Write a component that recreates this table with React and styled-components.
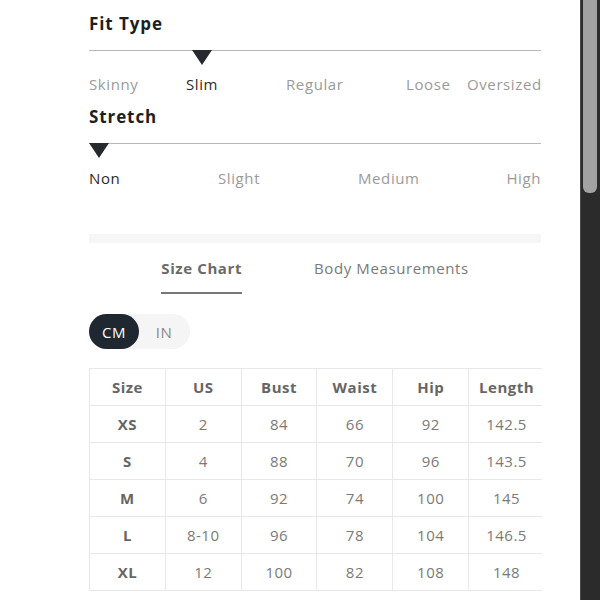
import React from "react";
import styled, { createGlobalStyle } from "styled-components";

const Global = createGlobalStyle`
  html, body { margin: 0; padding: 0; background: #fff; overflow: hidden; }
  body { font-family: "Open Sans", "Liberation Sans", sans-serif; }
  * { box-sizing: border-box; }
`;

const Page = styled.div`
  display: flex;
  width: 600px;
  height: 600px;
  overflow: hidden;
`;

const Main = styled.main`
  flex: 1;
  padding-left: 89px;
  padding-top: 13px;
`;

const Content = styled.div`
  width: 452px;
`;

const ScrollTrack = styled.div`
  width: 20px;
  height: 600px;
  background: #2b2b2b;
  border-left: 1px solid #4a4a4a;
  padding: 0 3px 0 2px;
`;

const ScrollThumb = styled.div`
  height: 193px;
  background: #a2a2a2;
  border-radius: 0 0 6px 6px;
`;

const Heading = styled.h3`
  margin: ${p => p.$mt || 0}px 0 0;
  font-size: 17px;
  font-weight: 700;
  color: #1e1e1e;
  letter-spacing: 0.9px;
  line-height: 22px;
`;

const Track = styled.div`
  position: relative;
  height: 1px;
  background: #b8b8b8;
  margin-top: ${p => p.$mt}px;
`;

const Marker = styled.div`
  position: absolute;
  top: 0;
  left: ${p => p.$left}px;
  width: 0;
  height: 0;
  border-left: 10px solid transparent;
  border-right: 10px solid transparent;
  border-top: 15px solid #262a2f;
`;

const Labels = styled.div`
  display: grid;
  grid-template-columns: ${p => p.$cols};
  margin-top: ${p => p.$mt}px;
  font-size: 15px;
  letter-spacing: 0.6px;
  line-height: 20px;
`;

const Label = styled.span`
  color: ${p => (p.$active ? "#2a2a2a" : "#9a9a9a")};
  white-space: nowrap;
  justify-self: ${p => (p.$end ? "end" : "start")};
`;

const Band = styled.div`
  height: 9px;
  background: #f6f6f6;
  margin-top: 46px;
`;

const Tabs = styled.div`
  display: flex;
  justify-content: center;
  gap: 72px;
  margin-top: 15px;
`;

const Tab = styled.div`
  font-size: 15px;
  letter-spacing: 0.6px;
  line-height: 20px;
  font-weight: ${p => (p.$active ? 700 : 400)};
  color: ${p => (p.$active ? "#6a6a6a" : "#7a7a7a")};
  padding-bottom: ${p => (p.$active ? 14 : 16)}px;
  border-bottom: ${p => (p.$active ? "2px solid #777" : "none")};
`;

const Toggle = styled.div`
  display: inline-flex;
  margin-top: 20px;
  height: 35px;
  width: 101px;
  border-radius: 18px;
  background: #f5f5f5;
`;

const ToggleOpt = styled.div`
  width: 50px;
  display: flex;
  align-items: center;
  justify-content: center;
  border-radius: 18px;
  font-size: 15px;
  letter-spacing: 0.5px;
  background: ${p => (p.$active ? "#1f2731" : "transparent")};
  color: ${p => (p.$active ? "#fff" : "#8a8a8a")};
`;

const TableWrap = styled.div`
  margin-top: 19px;
  width: 453px;
  overflow: hidden;
`;

const Table = styled.table`
  border-collapse: collapse;
  width: 456px;
  table-layout: fixed;
`;

const Cell = styled.td`
  height: 37px;
  padding: 0;
  text-align: center;
  border: 1px solid #e8e8e8;
  font-size: 15px;
  letter-spacing: 0.5px;
  font-weight: ${p => (p.$bold ? 700 : 400)};
  color: ${p => (p.$bold ? "#666" : "#7a7a7a")};
`;

const fit = ["Skinny", "Slim", "Regular", "Loose", "Oversized"];
const stretch = ["Non", "Slight", "Medium", "High"];
const head = ["Size", "US", "Bust", "Waist", "Hip", "Length"];
const rows = [
  ["XS", "2", "84", "66", "92", "142.5"],
  ["S", "4", "88", "70", "96", "143.5"],
  ["M", "6", "92", "74", "100", "145"],
  ["L", "8-10", "96", "78", "104", "146.5"],
  ["XL", "12", "100", "82", "108", "148"],
];

export default function App() {
  return (
    <>
      <Global />
      <Page>
        <Main>
          <Content>
            <Heading>Fit Type</Heading>
            <Track $mt={15}>
              <Marker $left={103} />
            </Track>
            <Labels $cols="97px 100px 120px 61px 1fr" $mt={23}>
              {fit.map((f, i) => (
                <Label key={f} $active={i === 1} $end={i === 4}>{f}</Label>
              ))}
            </Labels>
            <Heading $mt={12}>Stretch</Heading>
            <Track $mt={15}>
              <Marker $left={0} />
            </Track>
            <Labels $cols="129px 140px 1fr auto" $mt={24}>
              {stretch.map((s, i) => (
                <Label key={s} $active={i === 0} $end={i === 3}>{s}</Label>
              ))}
            </Labels>
            <Band />
            <Tabs>
              <Tab $active>Size Chart</Tab>
              <Tab>Body Measurements</Tab>
            </Tabs>
            <Toggle>
              <ToggleOpt $active>CM</ToggleOpt>
              <ToggleOpt>IN</ToggleOpt>
            </Toggle>
            <TableWrap>
              <Table>
                <tbody>
                  <tr>
                    {head.map(h => (
                      <Cell key={h} $bold>{h}</Cell>
                    ))}
                  </tr>
                  {rows.map(r => (
                    <tr key={r[0]}>
                      {r.map((c, i) => (
                        <Cell key={i} $bold={i === 0}>{c}</Cell>
                      ))}
                    </tr>
                  ))}
                </tbody>
              </Table>
            </TableWrap>
          </Content>
        </Main>
        <ScrollTrack>
          <ScrollThumb />
        </ScrollTrack>
      </Page>
    </>
  );
}
